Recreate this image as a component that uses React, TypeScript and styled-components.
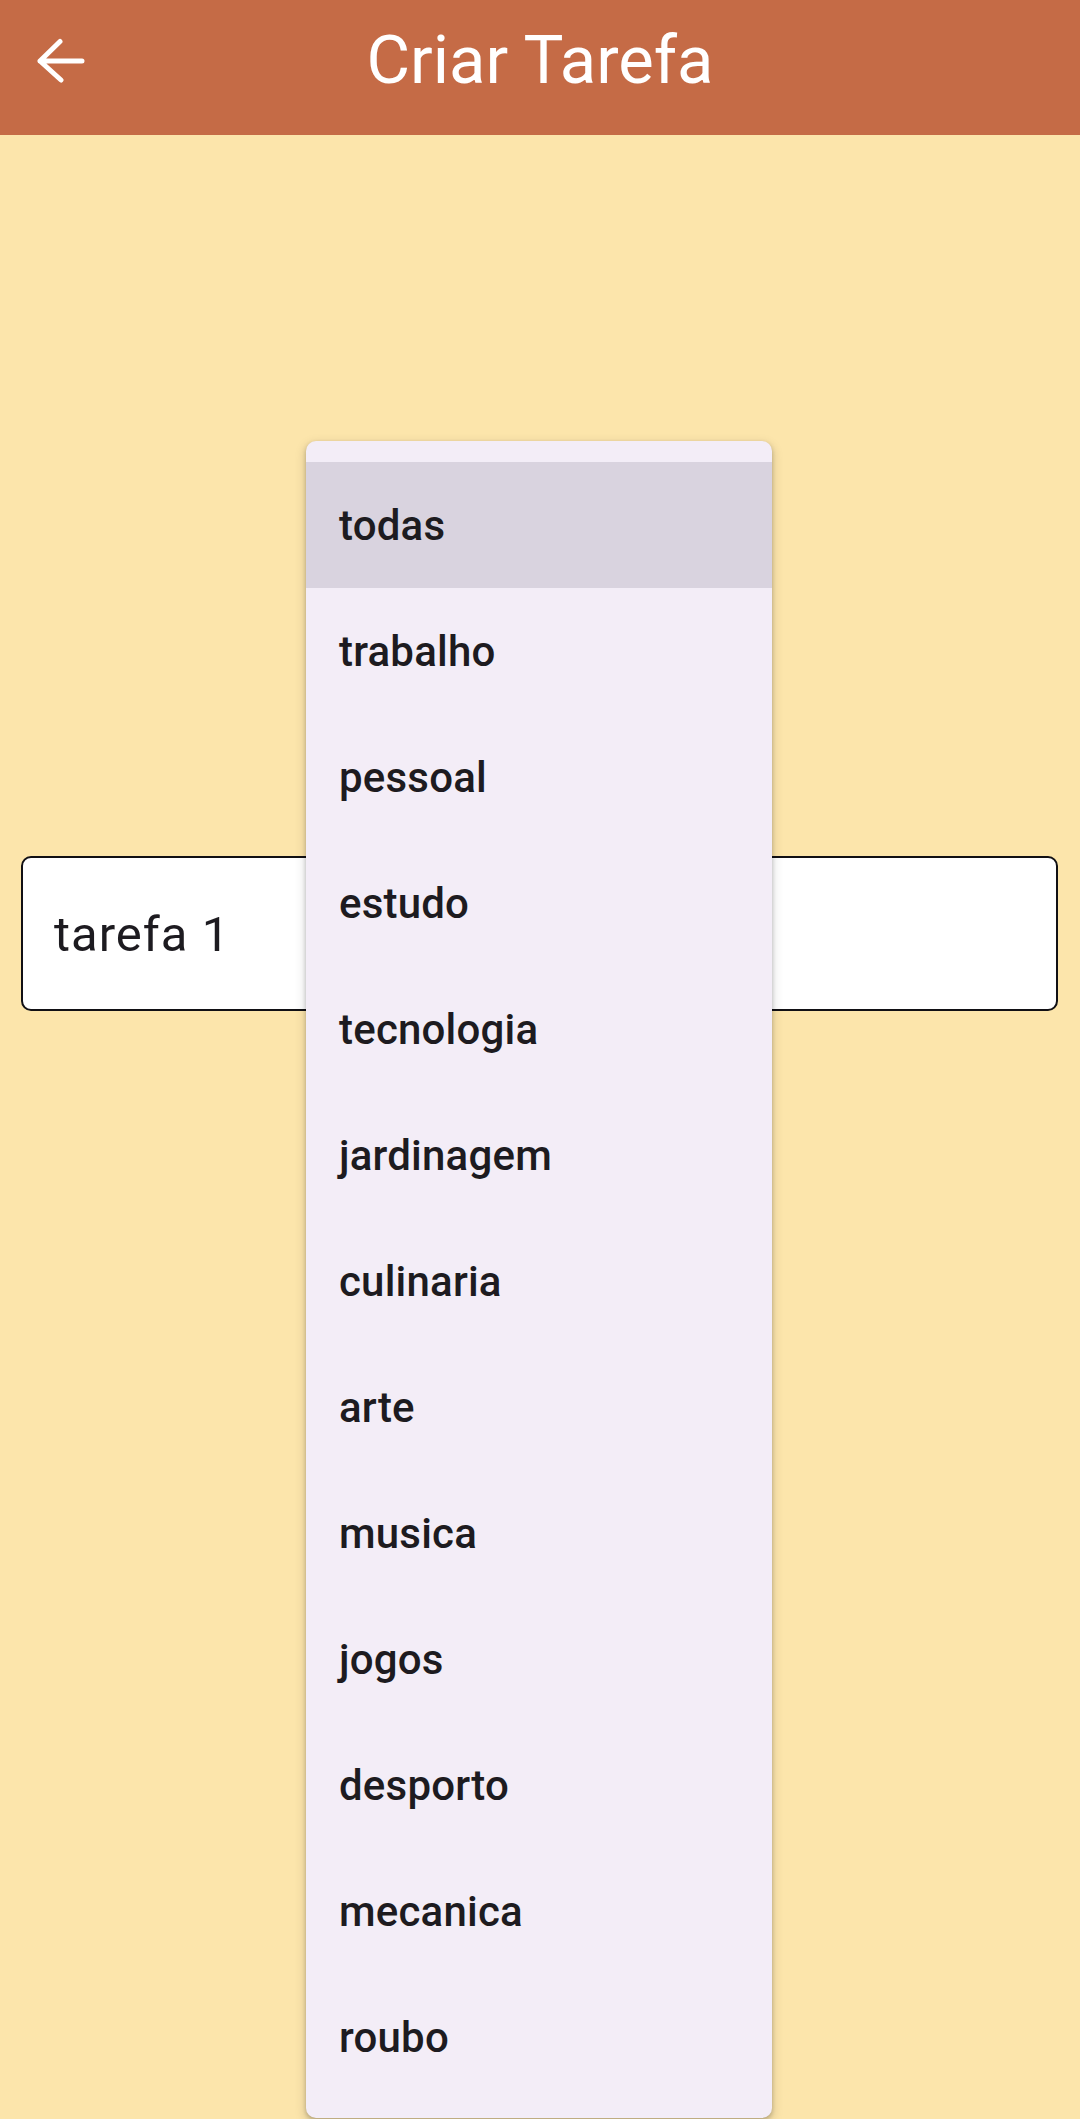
import React from "react";
import styled, { createGlobalStyle } from "styled-components";

const GlobalStyle = createGlobalStyle`
  html, body {
    margin: 0;
    padding: 0;
    background: #fce5ab;
  }
  body {
    font-family: Roboto, "Noto Sans", "Liberation Sans", sans-serif;
  }
`;

const Page = styled.div`
  position: relative;
  width: 1080px;
  height: 2119px;
  overflow: hidden;
  background: #fce5ab;
`;

const AppBar = styled.header`
  height: 135px;
  box-sizing: border-box;
  padding-bottom: 14px;
  background: #c56b46;
  display: grid;
  grid-template-columns: 1fr auto 1fr;
  align-items: center;
`;

const BackButton = styled.button`
  justify-self: start;
  margin-left: 30px;
  width: 60px;
  height: 60px;
  padding: 0;
  border: none;
  background: transparent;
  display: flex;
  align-items: center;
  justify-content: center;
  cursor: pointer;
`;

const Title = styled.h1`
  margin: 0;
  font-family: Roboto, "Liberation Sans", sans-serif;
  font-weight: 400;
  font-size: 67px;
  line-height: 1;
  color: #ffffff;
  white-space: nowrap;
`;

const Body = styled.main`
  padding: 721px 22px 0 21px;
`;

const Field = styled.div`
  height: 155px;
  box-sizing: border-box;
  border: 2.5px solid #111014;
  border-radius: 10px;
  background: #ffffff;
  padding-left: 31px;
  display: flex;
  align-items: center;
  padding-top: 2px;
`;

const FieldText = styled.span`
  font-family: Roboto, "Liberation Sans", sans-serif;
  font-size: 49px;
  font-weight: 400;
  color: #1d1b20;
  letter-spacing: 1px;
`;

const Menu = styled.ul`
  position: absolute;
  top: 441px;
  left: 306px;
  width: 466px;
  height: 1677px;
  box-sizing: border-box;
  margin: 0;
  padding: 21px 0 18px;
  list-style: none;
  background: #f3edf7;
  border-radius: 10px;
  box-shadow: 0 2px 4px rgba(0, 0, 0, 0.22), 0 4px 10px 3px rgba(0, 0, 0, 0.1);
`;

const Item = styled.li<{ $active?: boolean }>`
  height: 126px;
  box-sizing: border-box;
  padding-left: 33px;
  display: flex;
  align-items: center;
  background: ${(p) => (p.$active ? "#d9d3df" : "transparent")};
  font-family: Roboto, "Liberation Sans", sans-serif;
  font-size: 42px;
  font-weight: 500;
  letter-spacing: 0.2px;
  color: #1d1b20;
`;

const categories = [
  "todas",
  "trabalho",
  "pessoal",
  "estudo",
  "tecnologia",
  "jardinagem",
  "culinaria",
  "arte",
  "musica",
  "jogos",
  "desporto",
  "mecanica",
  "roubo",
];

const BackArrow = () => (
  <svg width="50" height="46" viewBox="0 0 50 46" fill="none">
    <path
      d="M47 23H5M25 3.5L5 23L26 42"
      stroke="#ffffff"
      strokeWidth="5"
      strokeLinecap="round"
      strokeLinejoin="round"
    />
  </svg>
);

export default function App() {
  return (
    <Page>
      <GlobalStyle />
      <AppBar>
        <BackButton aria-label="Voltar">
          <BackArrow />
        </BackButton>
        <Title>Criar Tarefa</Title>
        <span />
      </AppBar>
      <Body>
        <Field>
          <FieldText>tarefa 1</FieldText>
        </Field>
      </Body>
      <Menu>
        {categories.map((c, i) => (
          <Item key={c} $active={i === 0}>
            {c}
          </Item>
        ))}
      </Menu>
    </Page>
  );
}
